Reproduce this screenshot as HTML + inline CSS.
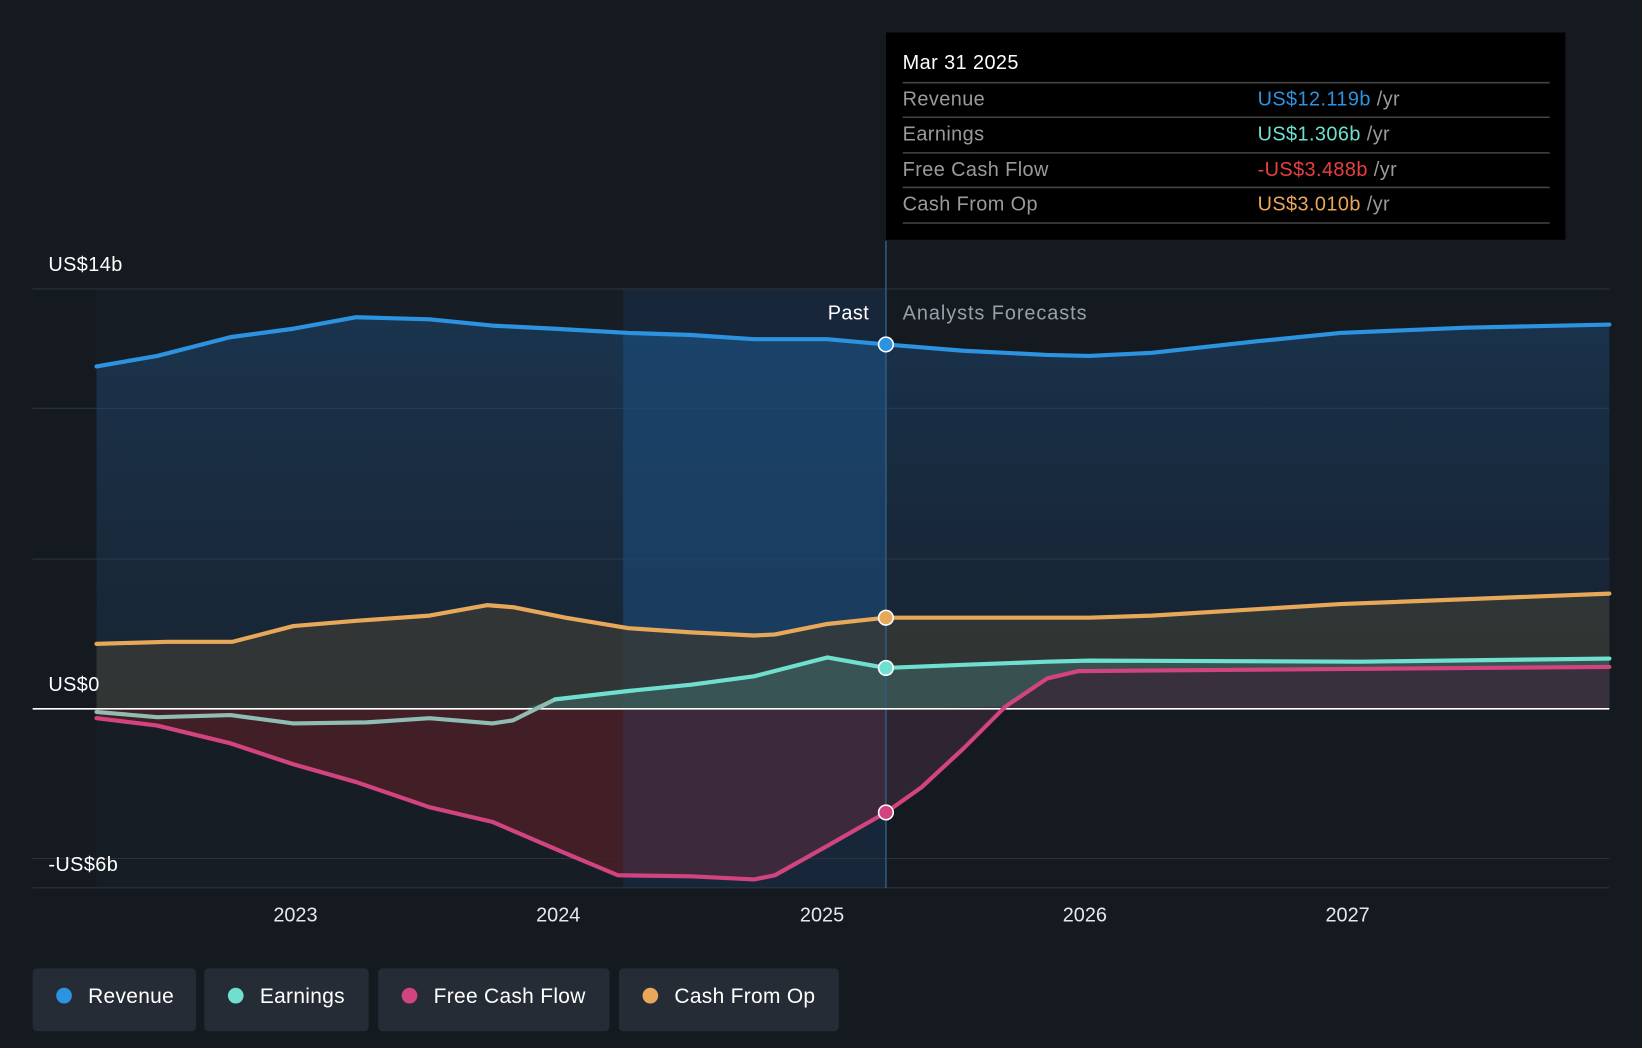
<!DOCTYPE html>
<html><head><meta charset="utf-8"><style>
html,body{margin:0;padding:0;background:#151a21;width:1642px;height:1048px;overflow:hidden}
svg{display:block;font-family:"Liberation Sans",sans-serif}
</style></head><body>
<svg width="1642" height="1048" viewBox="0 0 1568 1001" xmlns="http://www.w3.org/2000/svg">
<defs>
<linearGradient id="rev" x1="0" y1="0" x2="0" y2="1"><stop offset="0" stop-color="#1e5080" stop-opacity="0.45"/><stop offset="1" stop-color="#1c3a5a" stop-opacity="0.25"/></linearGradient>
<clipPath id="band"><rect x="595" y="276" width="251" height="572"/></clipPath>
</defs>
<rect width="1568" height="1001" fill="#151a21"/>
<rect x="92" y="276" width="503" height="572" fill="#171d25"/>
<rect x="595" y="276" width="251" height="572" fill="#18263a"/>
<g stroke="#2c333d" stroke-width="1">
<line x1="31" y1="276" x2="1537" y2="276"/><line x1="31" y1="390" x2="1537" y2="390"/>
<line x1="31" y1="534" x2="1537" y2="534"/><line x1="31" y1="820" x2="1537" y2="820"/>
<line x1="31" y1="848" x2="1537" y2="848"/>
</g>
<polygon fill="url(#rev)" points="92,350 150,340 220,322 280,314 340,303 410,305 470,311 530,314 600,318 660,320 720,324 790,324 846,329 920,335 1000,339 1040,340 1100,337 1200,326 1280,318 1400,313 1537,310 1537,677 92,677"/>
<polygon clip-path="url(#band)" fill="#1d5a8c" opacity="0.35" points="92,350 150,340 220,322 280,314 340,303 410,305 470,311 530,314 600,318 660,320 720,324 790,324 846,329 846,677 92,677"/>
<polygon fill="#3a3b35" opacity="0.75" points="92,615 160,613 222,613 280,598 340,593 410,588 465,578 490,580 540,590 600,600 660,604 720,607 740,606 790,596 846,590 1040,590 1100,588 1280,577 1537,567 1537,677 92,677"/>
<polygon fill="#3f6a68" opacity="0.55" points="530,668 600,660 660,654 720,646 790,628 846,638 920,635 1000,632 1040,631 1300,632 1537,629 1537,677 500,677"/>
<polygon fill="#4a1f27" opacity="0.85" points="92,686 150,693 220,710 280,730 340,747 410,771 470,785 540,815 590,836 660,837 720,840 740,836 790,808 846,776 846,677 92,677"/>
<polygon clip-path="url(#band)" fill="#3a2d45" opacity="0.7" points="540,815 590,836 660,837 720,840 740,836 790,808 846,776 846,677 540,677"/>
<polygon fill="#3a2a3a" opacity="0.7" points="846,776 880,752 920,715 960,675 846,677"/>
<polygon fill="#3a2c3c" opacity="0.9" points="960,675 1000,648 1030,641 1537,637 1537,677 960,677"/>
<line x1="846" y1="230" x2="846" y2="848" stroke="#2f5a80" stroke-width="1.5"/>
<line x1="31" y1="677" x2="1537" y2="677" stroke="#ffffff" stroke-width="1.5"/>
<g fill="none" stroke-width="4" stroke-linejoin="round" stroke-linecap="round">
<polyline stroke="#2b93e0" points="92,350 150,340 220,322 280,314 340,303 410,305 470,311 530,314 600,318 660,320 720,324 790,324 846,329 920,335 1000,339 1040,340 1100,337 1200,326 1280,318 1400,313 1537,310"/>
<polyline stroke="#e8a85a" points="92,615 160,613 222,613 280,598 340,593 410,588 465,578 490,580 540,590 600,600 660,604 720,607 740,606 790,596 846,590 1040,590 1100,588 1280,577 1537,567"/>
<polyline stroke="#8fbdb3" points="92,680 150,685 220,683 280,691 350,690 410,686 470,691 490,688 530,668"/>
<polyline stroke="#6fe0cf" points="530,668 600,660 660,654 720,646 790,628 846,638 920,635 1000,632 1040,631 1300,632 1537,629"/>
<polyline stroke="#d2447f" points="92,686 150,693 220,710 280,730 340,747 410,771 470,785 540,815 590,836 660,837 720,840 740,836 790,808 846,776 880,752 920,715 960,675 1000,648 1030,641 1537,637"/>
</g>
<g stroke="#fff" stroke-width="1.5">
<circle cx="846" cy="329" r="7" fill="#2b93e0"/><circle cx="846" cy="590" r="7" fill="#e8a85a"/>
<circle cx="846" cy="638" r="7" fill="#6fe0cf"/><circle cx="846" cy="776" r="7" fill="#d2447f"/>
</g>
<g font-size="19" fill="#fff" letter-spacing="0.4">
<text x="46" y="259">US$14b</text><text x="46" y="660">US$0</text><text x="46" y="832">-US$6b</text>
<text x="830" y="305" text-anchor="end">Past</text>
<text x="862" y="305" fill="#9aa0a8" letter-spacing="0.9">Analysts Forecasts</text>
</g>
<g font-size="19" fill="#e6e8ea" text-anchor="middle">
<text x="282" y="880">2023</text><text x="533" y="880">2024</text><text x="785" y="880">2025</text><text x="1036" y="880">2026</text><text x="1287" y="880">2027</text>
</g>
<rect x="846" y="31" width="649" height="198" fill="#000"/>
<g stroke="#444" stroke-width="1.5">
<line x1="862" y1="79" x2="1480" y2="79"/><line x1="862" y1="112" x2="1480" y2="112"/>
<line x1="862" y1="146" x2="1480" y2="146"/><line x1="862" y1="179" x2="1480" y2="179"/><line x1="862" y1="213" x2="1480" y2="213"/>
</g>
<g font-size="19" letter-spacing="0.4">
<text x="862" y="66" fill="#fff">Mar 31 2025</text>
<text x="862" y="101" fill="#9a9a9a">Revenue</text>
<text x="862" y="134" fill="#9a9a9a">Earnings</text>
<text x="862" y="168" fill="#9a9a9a">Free Cash Flow</text>
<text x="862" y="201" fill="#9a9a9a">Cash From Op</text>
<text x="1201" y="101" fill="#2b93e0">US$12.119b <tspan fill="#9a9a9a">/yr</tspan></text>
<text x="1201" y="134" fill="#6fe0cf">US$1.306b <tspan fill="#9a9a9a">/yr</tspan></text>
<text x="1201" y="168" fill="#e8403f">-US$3.488b <tspan fill="#9a9a9a">/yr</tspan></text>
<text x="1201" y="201" fill="#e8a85a">US$3.010b <tspan fill="#9a9a9a">/yr</tspan></text>
</g>
<g font-size="20" fill="#fff" letter-spacing="0.3">
<rect x="31" y="925" width="156" height="60" rx="4" fill="#262c35"/><circle cx="61" cy="951" r="7.5" fill="#2b93e0"/><text x="84" y="958">Revenue</text>
<rect x="195" y="925" width="157" height="60" rx="4" fill="#262c35"/><circle cx="225" cy="951" r="7.5" fill="#6fe0cf"/><text x="248" y="958">Earnings</text>
<rect x="361" y="925" width="221" height="60" rx="4" fill="#262c35"/><circle cx="391" cy="951" r="7.5" fill="#d2447f"/><text x="414" y="958">Free Cash Flow</text>
<rect x="591" y="925" width="210" height="60" rx="4" fill="#262c35"/><circle cx="621" cy="951" r="7.5" fill="#e8a85a"/><text x="644" y="958">Cash From Op</text>
</g>
</svg>
</body></html>
